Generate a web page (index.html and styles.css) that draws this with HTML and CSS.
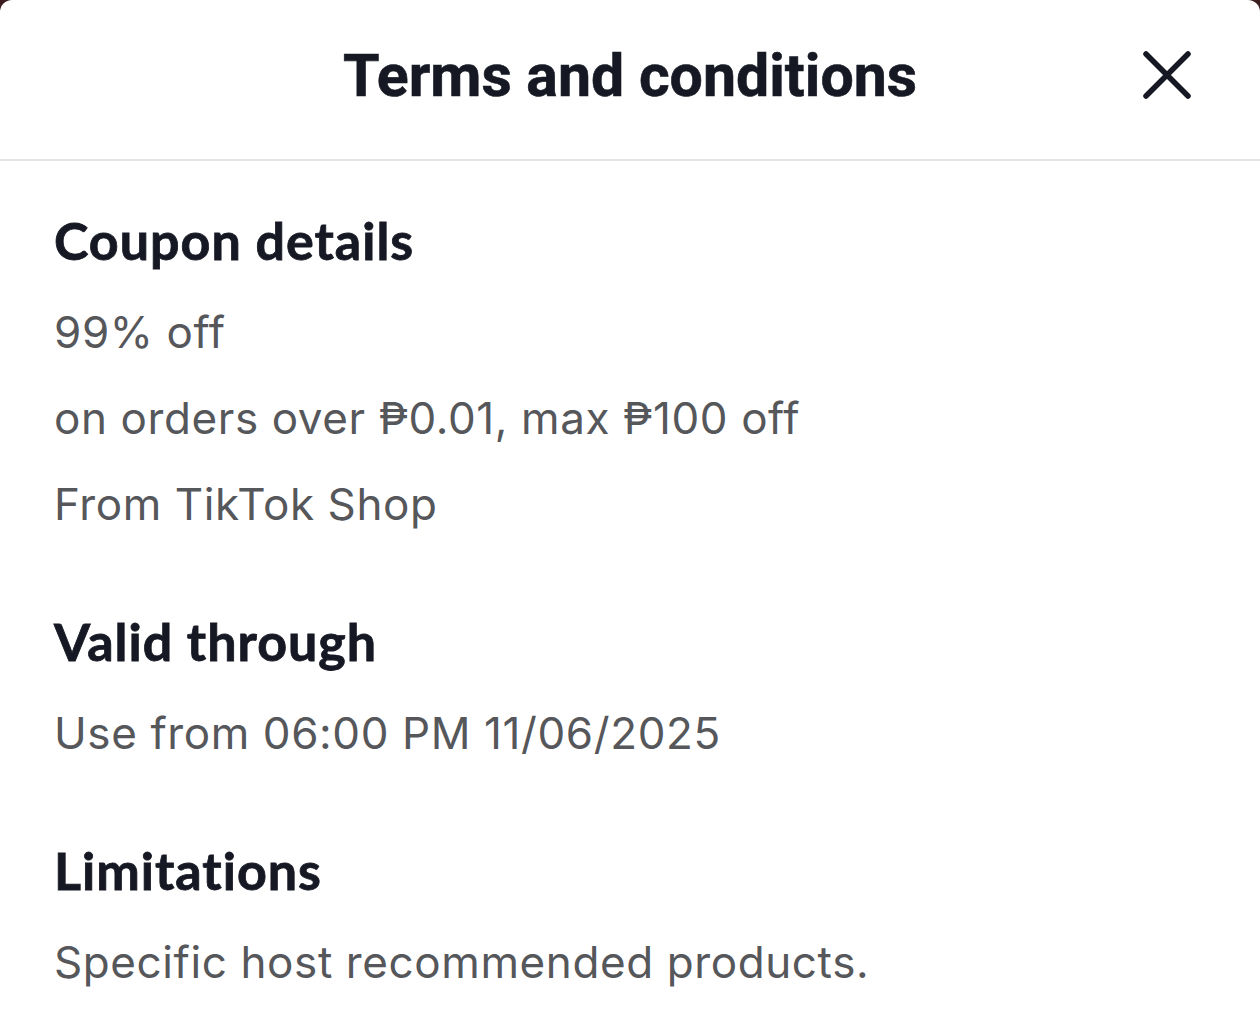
FILE: index.html
```html
<!DOCTYPE html>
<html lang="en">
<head>
<meta charset="utf-8">
<title>Terms and conditions</title>
<link rel="stylesheet" href="styles.css">
</head>
<body>
<div class="sheet">
  <header class="sheet-header">
    <h1 class="sheet-title">Terms and conditions</h1>
    <button class="close-btn" aria-label="Close">
      <svg width="50" height="48" viewBox="0 0 50 48" fill="none">
        <path d="M4 3 L46 45 M46 3 L4 45" stroke="#161823" stroke-width="5.5" stroke-linecap="round"/>
      </svg>
    </button>
  </header>
  <main class="sheet-body">
    <section class="section">
      <h2 class="section-title">Coupon details</h2>
      <p class="line">99% off</p>
      <p class="line">on orders over ₱0.01, max ₱100 off</p>
      <p class="line">From TikTok Shop</p>
    </section>
    <section class="section">
      <h2 class="section-title">Valid through</h2>
      <p class="line">Use from 06:00 PM 11/06/2025</p>
    </section>
    <section class="section">
      <h2 class="section-title">Limitations</h2>
      <p class="line">Specific host recommended products.</p>
    </section>
  </main>
</div>
</body>
</html>
```

FILE: styles.css
```css
html, body {
  margin: 0;
  padding: 0;
  background: #3b1d1f;
  height: 100%;
  overflow: hidden;
}
.sheet {
  background: #ffffff;
  border-radius: 12px 12px 0 0;
  height: 1032px;
  font-family: Roboto, "Liberation Sans", sans-serif;
  color: #161823;
}
.sheet-header {
  position: relative;
  height: 159px;
  border-bottom: 2px solid #e3e3e4;
  display: flex;
  align-items: center;
  justify-content: center;
}
.sheet-title {
  margin: 0;
  font-size: 59px;
  font-weight: 700;
  line-height: 1;
  padding-bottom: 8px;
  -webkit-text-stroke: 0.6px #161823;
}
.close-btn {
  position: absolute;
  right: 68px;
  top: 51px;
  width: 50px;
  height: 48px;
  border: 0;
  padding: 0;
  background: none;
  display: flex;
}
.sheet-body {
  padding: 37px 54px 0;
  display: flex;
  flex-direction: column;
  gap: 52px;
}
.section {
  display: flex;
  flex-direction: column;
}
.section-title {
  margin: -2px 0 5px;
  font-family: Lato, "Open Sans", sans-serif;
  font-size: 52px;
  font-weight: 700;
  letter-spacing: 1px;
  line-height: 88px;
  color: #161823;
  -webkit-text-stroke: 0.8px #161823;
}
.line {
  margin: 0;
  font-family: Inter, Roboto, sans-serif;
  font-size: 44px;
  letter-spacing: 0.6px;
  line-height: 86px;
  color: #56575b;
}
```
